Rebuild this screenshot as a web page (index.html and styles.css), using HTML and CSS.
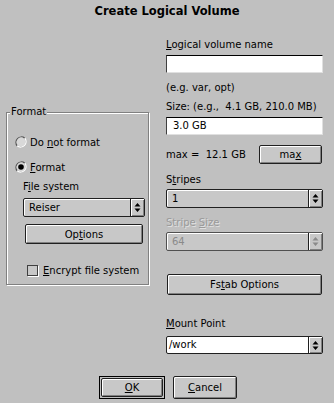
FILE: index.html
```html
<!DOCTYPE html>
<html>
<head>
<meta charset="utf-8">
<link rel="stylesheet" href="styles.css">
</head>
<body>
<div class="dialog">
  <div class="title">Create Logical Volume</div>
  <div class="content">
    <div class="left">
      <div class="frame">
        <div class="legend">Format</div>
        <div class="radio r1">
          <svg class="rb" width="12" height="12" viewBox="0 0 12 12"><path d="M2.2 9.8A5.4 5.4 0 0 1 9.8 2.2" fill="none" stroke="#555" stroke-width="1.2"/><path d="M9.8 2.2A5.4 5.4 0 0 1 2.2 9.8" fill="none" stroke="#fff" stroke-width="1.2"/><circle cx="6" cy="6" r="4.4" fill="#d8d8d8"/></svg>
          <span>Do <u>n</u>ot format</span>
        </div>
        <div class="radio r2">
          <svg class="rb" width="12" height="12" viewBox="0 0 12 12"><path d="M2.2 9.8A5.4 5.4 0 0 1 9.8 2.2" fill="none" stroke="#555" stroke-width="1.2"/><path d="M9.8 2.2A5.4 5.4 0 0 1 2.2 9.8" fill="none" stroke="#fff" stroke-width="1.2"/><circle cx="6" cy="6" r="4.4" fill="#d8d8d8"/><circle cx="6" cy="6" r="2.8" fill="#000"/></svg>
          <span><u>F</u>ormat</span>
        </div>
        <div class="lbl fs">F<u>i</u>le system</div>
        <div class="combo fscombo">
          <span class="cv">Reiser</span>
          <span class="arr"><svg width="7" height="9" viewBox="0 0 7 9"><path d="M3.5 0L6.5 3.5H0.5Z M3.5 9L6.5 5.5H0.5Z" fill="#000"/></svg></span>
        </div>
        <div class="btn optbtn">Op<u>t</u>ions</div>
        <div class="check">
          <span class="cb"></span>
          <span><u>E</u>ncrypt file system</span>
        </div>
      </div>
    </div>
    <div class="right">
      <div class="lbl l1"><u>L</u>ogical volume name</div>
      <div class="entry e1"></div>
      <div class="lbl l2">(e.g. var, opt)</div>
      <div class="lbl l3">Size: (e.g., &nbsp;4.1 GB, 210.0 MB)</div>
      <div class="entry e2">3.0 GB</div>
      <div class="maxrow">
        <span class="maxtxt">max = &nbsp;12.1 GB</span>
        <div class="btn maxbtn">ma<u>x</u></div>
      </div>
      <div class="lbl l4">S<u>t</u>ripes</div>
      <div class="combo c1">
        <span class="cv">1</span>
        <span class="arr"><svg width="7" height="9" viewBox="0 0 7 9"><path d="M3.5 0L6.5 3.5H0.5Z M3.5 9L6.5 5.5H0.5Z" fill="#000"/></svg></span>
      </div>
      <div class="lbl l5 dis">Stripe <u>S</u>ize</div>
      <div class="combo c2 discombo">
        <span class="cv">64</span>
        <span class="arr"><svg width="7" height="9" viewBox="0 0 7 9"><path d="M3.5 0L6.5 3.5H0.5Z M3.5 9L6.5 5.5H0.5Z" fill="#8a8a8a"/></svg></span>
      </div>
      <div class="btn fstab">Fs<u>t</u>ab Options</div>
      <div class="lbl l6"><u>M</u>ount Point</div>
      <div class="combo c3 editcombo">
        <span class="cv">/work</span>
        <span class="arr"><svg width="7" height="9" viewBox="0 0 7 9"><path d="M3.5 0L6.5 3.5H0.5Z M3.5 9L6.5 5.5H0.5Z" fill="#000"/></svg></span>
      </div>
    </div>
  </div>
  <div class="actions">
    <div class="default"><div class="btn okbtn"><u>O</u>K</div></div>
    <div class="btn cancelbtn"><u>C</u>ancel</div>
  </div>
</div>
</body>
</html>
```
FILE: styles.css
```css
html, body {
  margin: 0;
  padding: 0;
  background: #c0c0c0;
}
body {
  width: 334px;
  height: 403px;
  overflow: hidden;
  font-family: "DejaVu Sans", "Liberation Sans", sans-serif;
  font-size: 10px;
  color: #000;
}
u { text-decoration: underline; text-underline-offset: 1px; }
.dialog { display: flex; flex-direction: column; }
.title {
  font-weight: bold;
  font-size: 11.5px;
  text-align: center;
  height: 14px;
  line-height: 14px;
  margin-top: 4px;
}
.content {
  display: flex;
  padding-left: 6px;
  height: 336px;
  margin-top: 20px;
}
.left { width: 143px; padding-top: 74px; }
.frame {
  position: relative;
  height: 171px;
  border: 1px solid #808080;
  box-shadow: inset 1px 1px #fff, 1px 1px #fff;
  display: flex;
  flex-direction: column;
}
.legend {
  position: absolute;
  left: 3px;
  top: -8px;
  background: #c0c0c0;
  padding: 0 1px;
  line-height: 14px;
}
.radio { display: flex; align-items: center; gap: 3px; height: 14px; margin-left: 8px; }
.rb { flex: none; }
.r1 { margin-top: 22px; }
.r2 { margin-top: 11px; }
.lbl { line-height: 14px; height: 14px; white-space: nowrap; }
.fs { margin-top: 6px; margin-left: 16px; }
.combo {
  display: flex;
  align-items: stretch;
  height: 19px;
  box-sizing: border-box;
  border: 1px solid #202020;
  border-radius: 2px;
  background: #c8c8c8;
  box-shadow: inset 1px 1px #fff;
}
.combo .cv { flex: 1; padding-left: 5px; line-height: 17px; }
.combo .arr {
  width: 13px;
  border-left: 1px solid #202020;
  display: flex;
  align-items: center;
  justify-content: center;
  background: #c8c8c8;
  box-shadow: inset 1px 1px #fff, inset -1px -1px #808080;
}
.fscombo { margin: 4px 3px 0 16px; }
.btn {
  box-sizing: border-box;
  border: 1px solid #202020;
  border-radius: 2px;
  background: #c8c8c8;
  box-shadow: inset 1px 1px #fff, inset -1px -1px #808080;
  display: flex;
  align-items: center;
  justify-content: center;
  white-space: nowrap;
}
.optbtn { height: 20px; margin: 7px 5px 0 18px; }
.check { display: flex; align-items: center; gap: 5px; margin: 19px 0 0 20px; height: 14px; white-space: nowrap; }
.cb {
  width: 9px; height: 9px;
  border: 1px solid #404040;
  box-shadow: 1px 1px #fff;
  background: #c8c8c8;
}
.right { margin-left: 17px; width: 157px; display: flex; flex-direction: column; }
.l1 { margin-top: 0; }
.entry {
  height: 18px;
  box-sizing: border-box;
  background: #fff;
  border-top: 1px solid #000;
  border-left: 1px solid #404040;
  border-right: 1px solid #e0e0e0;
  border-bottom: 1px solid #e0e0e0;
  line-height: 16px;
  padding-left: 6px;
}
.e1 { margin-top: 3px; }
.l2 { margin-top: 8px; }
.l3 { margin-top: 5px; }
.e2 { margin-top: 3px; }
.maxrow { display: flex; align-items: center; justify-content: space-between; margin-top: 10px; height: 19px; }
.maxbtn { width: 63px; height: 19px; margin-right: 1px; }
.l4 { margin-top: 9px; }
.c1 { margin-top: 2px; }
.l5 { margin-top: 8px; }
.dis { color: #9a9a9a; text-shadow: 1px 1px #e0e0e0; }
.discombo { border-color: #505050; color: #8a8a8a; }
.c2 { margin-top: 2px; }
.fstab { height: 21px; margin: 23px 1px 0 1px; }
.l6 { margin-top: 22px; }
.c3 { margin-top: 5px; height: 18px; }
.editcombo { background: #fff; box-shadow: none; border-color: #202020; }
.editcombo .cv { padding-left: 2px; line-height: 16px; }
.actions { display: flex; justify-content: center; gap: 8px; padding-left: 2px; margin-top: 2px; }
.default {
  border: 1px solid #000;
  padding: 1px;
  width: 66px; height: 23px; box-sizing: border-box;
  display: flex;
}
.okbtn { flex: 1; }
.cancelbtn { width: 64px; height: 23px; }
```
